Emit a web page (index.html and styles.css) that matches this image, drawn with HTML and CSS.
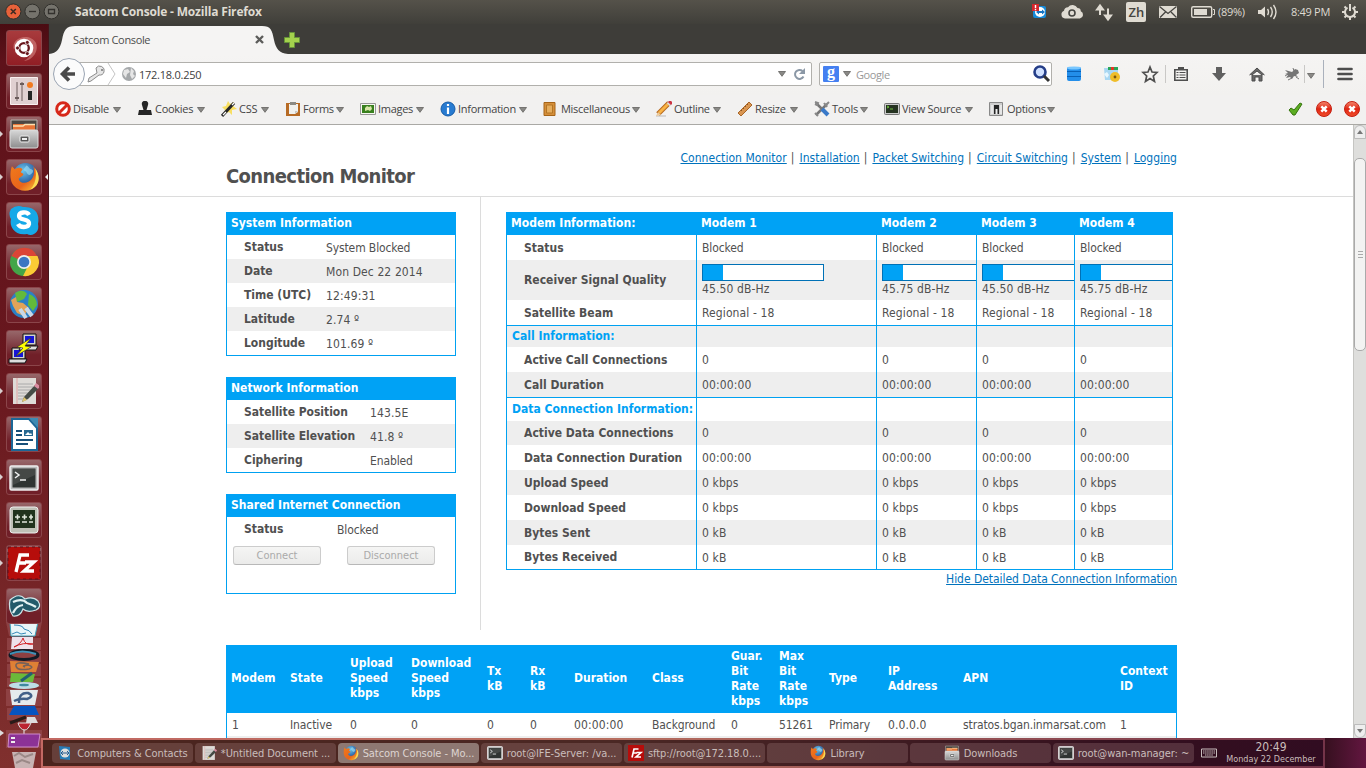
FILE: index.html
```html
<!DOCTYPE html>
<html lang="en">
<head>
<meta charset="utf-8">
<title>Satcom Console</title>
<link rel="stylesheet" href="styles.css">
</head>
<body>
<svg class="defs" width="0" height="0">
  <defs>
    <linearGradient id="metal" x1="0" y1="0" x2="0" y2="1"><stop offset="0" stop-color="#d8d8d8"/><stop offset="1" stop-color="#8d8d8d"/></linearGradient>
    <radialGradient id="foxglobe" cx=".4" cy=".3" r=".7"><stop offset="0" stop-color="#6bc7ee"/><stop offset="1" stop-color="#153a86"/></radialGradient>
    <linearGradient id="foxfur" x1="0" y1="0" x2="1" y2="1"><stop offset="0" stop-color="#f07a1c"/><stop offset=".6" stop-color="#e8641b"/><stop offset="1" stop-color="#fbd03c"/></linearGradient>
    <linearGradient id="redball" x1="0" y1="0" x2="0" y2="1"><stop offset="0" stop-color="#f58a70"/><stop offset=".5" stop-color="#e02412"/><stop offset="1" stop-color="#f0502c"/></linearGradient>
    <symbol id="caret" viewBox="0 0 8 6"><path d="M.5.5h7L4 5.3z" fill="#8a8986" stroke="#6c6b69" stroke-width=".9"/></symbol>
    <symbol id="firefox" viewBox="0 0 32 32">
      <circle cx="17" cy="14.500" r="13" fill="url(#foxglobe)"/>
      <path d="M18 4c3 1 2 3 5 4s2 3 0 5-4 0-5-2-3-1-3-3z" fill="#9bdcf2" opacity=".65"/>
      <path d="M3 5l3 3c3-2 6-2 8 0l-2 3 3 2c-1 3-4 3-5 5 1 4 6 5 10 3 6-3 7-10 5-16 6 6 7 15 3 20-6 7-17 7-23 0C1 21 .5 12 3 5z" fill="url(#foxfur)"/>
      <path d="M27 7c6 8 5 18-5 22 5-5 7-13 5-22z" fill="#fbdc53"/>
    </symbol>
    <symbol id="terminal" viewBox="0 0 30 26"><rect x="1" y="1" width="28" height="24" rx="1.500" fill="#bbb" stroke="#eee" stroke-width="1.500"/><rect x="3.500" y="3.500" width="23" height="19" fill="#303432"/><path d="M6 7l4 3-4 3M11 15h6" stroke="#eee" stroke-width="1.500" fill="none"/><path d="M4 4h22v6L4 20z" fill="#fff" opacity=".1"/></symbol>
    <symbol id="note" viewBox="0 0 28 30"><path d="M2 2h23v26H2z" fill="#dedbd7"/><path d="M6 2v26" stroke="#e0a4a4"/><path d="M7 8h15M7 11h15M7 14h13M7 17h12M7 20h9M7 23h7" stroke="#aaa"/><path d="M11 26l2-5L24 9l4 3-11 11z" fill="#454b45"/><path d="M11 26l2-5 3 3z" fill="#ddc46d"/><path d="M23 10l2-3 4 3-2 3z" fill="#d98ba0"/></symbol>
    <symbol id="cabinet" viewBox="0 0 30 32"><path d="M2 2h26v12H2z" fill="#4d4742" stroke="#b9b3ae"/><path d="M4 6h22v6H4z" fill="#e87537"/><path d="M4 8h10l2-1.500h10" stroke="#fbe0b0" stroke-width="1.500" fill="none"/><rect x="1" y="12" width="28" height="18" rx="2" fill="url(#metal)" stroke="#ddd"/><rect x="11" y="18" width="9" height="6" rx="1" fill="#555" stroke="#eee"/><path d="M13 21h5" stroke="#eee" stroke-width="2"/></symbol>
    <symbol id="filezilla" viewBox="0 0 32 32"><path d="M0 0h32v32H0z" fill="#b60d0b"/><path d="M8 25l4-17h9M10 16h8M17 15h9l-10 9h10" fill="none" stroke="#fff" stroke-width="3.300"/></symbol>
    <symbol id="closeball" viewBox="0 0 16 16"><circle cx="8" cy="8" r="7.500" fill="url(#redball)" stroke="#c52012"/><path d="M5.300 5.300l5.400 5.400M10.700 5.300l-5.400 5.400" stroke="#fff" stroke-width="2.500"/></symbol>
  </defs>
</svg>

<div class="desktop">
  <header class="panel">
    <div class="controls">
      <svg width="62" height="24" viewBox="0 0 62 24"><circle cx="13.300" cy="11.500" r="7.600" fill="#e8623a" stroke="#31302c"/><path d="M10.800 9l5 5m0-5l-5 5" stroke="#3d2b22" stroke-width="1.600"/><circle cx="32.300" cy="11.500" r="7.400" fill="#75736c" stroke="#31302c"/><path d="M29 11.500h7" stroke="#33312d" stroke-width="1.300"/><circle cx="51.500" cy="11.500" r="7.400" fill="#75736c" stroke="#31302c"/><path d="M48.500 9.500h6v4h-6z" fill="none" stroke="#33312d" stroke-width="1.300"/></svg>
    </div>
    <div class="wintitle">Satcom Console - Mozilla Firefox</div>
    <svg class="tray" width="192" height="24" viewBox="1030 0 192 24">
      <rect x="1033" y="6" width="13" height="12" rx="2" fill="#178ad8"/><circle cx="1040" cy="12" r="5" fill="#fff"/><path d="M1036 12l3-2.500v1.500h3V9.500l3 2.500-3 2.500V13h-3v1.500z" fill="#1575c4"/><path d="M1032 4h7v7h-7z" fill="#d6262c"/><path d="M1035.500 5v3.200m0 .8v1.200" stroke="#fff" stroke-width="1.400"/>
      <path d="M1065 18.500a4 4 0 0 1-1-7.700 4 4 0 0 1 4-3.500 5.500 5.500 0 0 1 9.500.8 3.300 3.300 0 0 1 3.300 3.200 3.800 3.800 0 0 1-.9 7.200z" fill="#dfdbd2"/><circle cx="1072" cy="13" r="3" fill="none" stroke="#454440" stroke-width="1.600"/>
      <path d="M1100 15V7M1097 9.500l3-4 3 4zM1108 8.500V17M1105 15.500l3 4 3-4z" stroke="#dfdbd2" stroke-width="2" fill="#dfdbd2"/>
      <rect x="1126" y="2" width="20" height="20" rx="2" fill="#dfdbd2"/>
      <text x="1128.500" y="17" class="lang">Zh</text>
      <path d="M1159 6h18v12h-18z" fill="#dfdbd2"/><path d="M1159.500 6.500l8.500 7 8.500-7M1160 17.500l5.500-5.500M1176.500 17.500l-5.500-5.500" stroke="#454440" stroke-width="1.300" fill="none"/>
      <rect x="1191.700" y="6.700" width="20" height="10.600" rx="1.500" fill="none" stroke="#dfdbd2" stroke-width="1.400"/><path d="M1194 9h13v6h-13z" fill="#dfdbd2"/><path d="M1213 9.500h1.500v5h-1.500" stroke="#dfdbd2" fill="none"/>
    </svg>
    <span class="traytext battery">(89%)</span>
    <svg class="sound" width="22" height="24" viewBox="0 0 22 24"><path d="M1 10h3l4-3.500v11L4 14H1z" fill="#dfdbd2"/><path d="M10.500 9q2 3 0 6M13.500 7q3.500 5 0 10M16.500 5q5 7 0 14" stroke="#dfdbd2" stroke-width="1.400" fill="none"/></svg>
    <span class="traytext clock">8:49 PM</span>
    <svg width="18" height="24" viewBox="0 0 18 24"><path d="M6.500 7.700a5 5 0 1 0 5 0" fill="none" stroke="#dfdbd2" stroke-width="2"/><path d="M9 4v7M9 17v3M14 12h3M1 12h3M12.500 15.500l2 2M5.500 15.500l-2 2M13 8l1.500-1.500M5 8L3.500 6.500" stroke="#dfdbd2" stroke-width="2"/></svg>
  </header>

  <div class="workspace">
    <nav class="launcher">
      <div class="tile ubuntu"><svg viewBox="0 0 36 36"><path d="M8 20C4 7 24 2 30 13c3 8-3 17-12 18 8-4 10-13 3-17C15 10 9 13 8 20z" fill="#e8a5a0" opacity=".45"/><circle cx="18" cy="18" r="9.300" fill="#fff"/><circle cx="18" cy="18" r="4.800" fill="none" stroke="#68151b" stroke-width="2.300"/><g fill="#68151b" stroke="#fff" stroke-width=".8"><circle cx="11.500" cy="18" r="2"/><circle cx="21.300" cy="12.400" r="2"/><circle cx="21.300" cy="23.600" r="2"/></g></svg></div>
      <div class="tile"><svg viewBox="0 0 36 36"><path d="M4.500 4.500h27v27h-27z" fill="#e0d0d1" stroke="#faf0f0"/><path d="M11 9v19M16 9v19" stroke="#6b5b5b"/><path d="M9 25h4M14 11h4" stroke="#6b5b5b" stroke-width="2"/><circle cx="24" cy="12" r="3" fill="#f27a20"/><rect x="22" y="18" width="4" height="9" fill="#242424"/></svg></div>
      <div class="tile run"><svg viewBox="0 0 36 36"><use href="#cabinet" x="3" y="2" width="30" height="32"/></svg></div>
      <div class="tile run active"><svg viewBox="0 0 36 36"><use href="#firefox" x="3" y="2" width="31" height="32"/></svg></div>
      <div class="tile"><svg viewBox="0 0 36 36"><path d="M5 7q6-5 12-2c13-1 17 8 15 17 2 8-5 13-11 10C9 34 3 25 5 17q-3-5 0-10z" fill="#16a9e8"/><path d="M23 13c-2-4-10-3-10 1 0 5 11 2 10 8-1 4-9 4-11 0" fill="none" stroke="#fff" stroke-width="4.300"/></svg></div>
      <div class="tile"><svg viewBox="0 0 36 36"><circle cx="18" cy="18" r="14" fill="#43a548"/><path d="M18 18L5.500 12A14 14 0 0 1 31 12z" fill="#db4437"/><path d="M18 12h13.500A14 14 0 0 1 17 32l6-12z" fill="#fbcb35"/><circle cx="18" cy="18" r="7" fill="#eee"/><circle cx="18" cy="18" r="5.300" fill="#3b76c2"/></svg></div>
      <div class="tile"><svg viewBox="0 0 36 36"><circle cx="18" cy="17" r="14" fill="#2c80c5"/><path d="M9 6q8-5 12 1l-3 5-7 3zM23 7q8 3 8 11l-4 6-5-6z" fill="#63ba3b"/><path d="M5 13l5-3 1 5 6 1 6 5-5 8-7-3-4-7z" fill="#e3a358"/><path d="M14 22l6 9M20 21l6 8" stroke="#c8d8e8" stroke-width="4"/></svg></div>
      <div class="tile"><svg viewBox="0 0 36 36"><path d="M17 4h13v11H17zM6 18h13v11H6z" fill="#d3d3cc" stroke="#111"/><path d="M19 6h9v7h-9zM8 20h9v7H8z" fill="#1515d6"/><path d="M15 16h17l-2 4H13zM3 29h18l-2 4H3z" fill="#ddd" stroke="#111"/><path d="M25 8l-14 9 6 1-7 8 15-9-6-1z" fill="#ff0" stroke="#333" stroke-width=".7"/></svg></div>
      <div class="tile run"><svg viewBox="0 0 36 36"><use href="#note" x="5" y="3" width="28" height="30"/></svg></div>
      <div class="tile"><svg viewBox="0 0 36 36"><path d="M6 3h17l8 9v22H6z" fill="#fff" stroke="#1c6797" stroke-width="2"/><path d="M23 2l9 10V2z" fill="#3d8ab3"/><path d="M10 15h6M10 19h6M10 24h17M10 28h12" stroke="#174f79" stroke-width="2"/><path d="M18 14h9v6h-9z" fill="#286991"/><path d="M19 19l3-3 2 2 1-1 1 2z" fill="#fff"/></svg></div>
      <div class="tile run"><svg viewBox="0 0 36 36"><use href="#terminal" x="3" y="6" width="30" height="26"/></svg></div>
      <div class="tile"><svg viewBox="0 0 36 36"><rect x="4" y="5" width="28" height="26" rx="3" fill="#bfc1b7" stroke="#eee"/><path d="M7 8h22v18H7z" fill="#20321d"/><path d="M9 15h5M16 15h5M23 15h4M11.500 12.500v5M18.500 12.500v5M25 12.500v5M9 20h5M16 20h5M23 20h4" stroke="#dfe6db" stroke-width="1.600"/></svg></div>
      <div class="tile run"><svg viewBox="0 0 36 36"><use href="#filezilla" x="2" y="2" width="32" height="32"/><path d="M2 2h32v32H2z" fill="none" stroke="#611018" stroke-dasharray="3 3"/></svg></div>
      <div class="tile last"><svg viewBox="0 0 36 36"><path d="M4 12q9-8 15-1 8-3 13 2 4 6-2 9-9 3-13-1-3 8-10 7-5-7-3-16z" fill="#225b6b" stroke="#cde5e8" stroke-width="1.200"/><path d="M7 14q9-4 14 1 6 2 9 4M7 25q3-7 10-8" fill="none" stroke="#e3f3f3" stroke-width="2.200"/></svg></div>
      <svg class="stack" width="49" height="146" viewBox="0 0 49 146">
        <g fill="#9e5357" opacity=".55"><path d="M6 0h36l-3 14H9z"/><path d="M7 16h34v12H7zM7 29h34v11H7zM7 42h34v12H7zM7 56h34v9H7zM6 67h36v17H6zM7 86h34v12H7zM6 108h36v18H6z"/></g>
        <path d="M10 0h28l-3 14H11z" fill="#e9f5f8" stroke="#3da2bb"/><path d="M14 3q9 0 10 4 6 1 8 5M12 12l5-2 4 2 5-1" stroke="#3489b8" fill="none"/>
        <path d="M12 15h21v12H11z" fill="#eee1eb"/><path d="M14 25q7-3 9-9 2 8 10 6-10-2-19 3" stroke="#d32329" fill="none"/>
        <ellipse cx="24" cy="33" rx="14" ry="4.500" fill="none" stroke="#111a25" stroke-width="3"/><path d="M10 32q12-5 26 0" stroke="#3f92b9" stroke-width="2" fill="none"/>
        <path d="M10 39l29 1-3 10H11z" fill="#df8035"/><path d="M29 42q-14-3-13 2t13 3q6-2-1-4-7 1-3 2" stroke="#75615a" stroke-width="1.600" fill="none"/>
        <path d="M11 51l24 1-2 8H10z" fill="#6bb93a"/><path d="M21 59l11-8" stroke="#225f72" stroke-width="3"/>
        <ellipse cx="24" cy="63.500" rx="15" ry="3.500" fill="#bedde5"/><ellipse cx="24" cy="63" rx="5" ry="1.300" fill="#3f8aa0"/>
        <path d="M10 68h28l-3 15H12z" fill="#e5eaed"/><path d="M19 81q0-11 9-10 7 3-1 6-7-1-13 2" stroke="#415f88" stroke-width="2.500" fill="none"/>
        <path d="M14 84h21l4 9H9z" fill="#0754c0"/><path d="M10 101l16-6" stroke="#291b18" stroke-width="3"/><path d="M27 95h8l3 6H26z" fill="#ddd"/>
        <path d="M18 101h13q-3 7-6 7-5 0-7-7" fill="#bc2330" stroke="#ddd"/><path d="M24 108v4" stroke="#eee"/>
        <path d="M9 112h31l-2 13H8z" fill="#8c3296" stroke="#ce8ac9"/><path d="M11 115h4v2h-4zM11 119h4v2h-4z" fill="#eee"/>
        <path d="M12 130h24l-3 16H15z" fill="#dad5d4" opacity=".8"/><path d="M14 134l5-3 6 4 8-3M16 141l6-3 8 3" stroke="#9b8987" stroke-width="2" fill="none"/>
        <path d="M0 108l4 3-4 3z" fill="#ddd"/>
      </svg>
    </nav>

    <main class="browser">
      <div class="tabs">
        <svg class="tabshape" width="242" height="30" viewBox="0 0 242 30"><path d="M0 30C8 29 11 25 13 16 15 6 17 2 26 2h187c9 0 10 4 12 14 2 9 5 13 14 14z" fill="#f5f4f3"/></svg>
        <div class="tabface"><span>Satcom Console</span><svg width="9" height="9" viewBox="0 0 9 9"><path d="M1 1l7 7M8 1L1 8" stroke="#5c5c5a" stroke-width="2.400"/></svg></div>
        <svg class="newtab" width="16" height="16" viewBox="0 0 16 16"><path d="M5.500.5h5v5h5v5h-5v5h-5v-5h-5v-5h5z" fill="#a4d24d" stroke="#67933a"/></svg>
      </div>
      <div class="navbar">
        <svg class="back" width="34" height="34" viewBox="0 0 34 34"><circle cx="17" cy="17" r="15.500" fill="#fbfbfb" stroke="#9aa4b2"/><path d="M17 10.500L10.500 17l6.500 6.500M11 17h12" stroke="#4a4a4a" stroke-width="3.600" fill="none"/></svg>
        <div class="url">
          <svg width="56" height="22" viewBox="0 0 56 22"><path d="M11 5a4.500 4.500 0 1 1 3 7l-8 6-3 1 1-4 8-5z" fill="#e6e6e6" stroke="#8c8c8c"/><circle cx="17" cy="7" r="1" fill="#777"/><path d="M23 0l7 11-7 11" stroke="#c4c4c4" fill="none"/><circle cx="44" cy="11" r="7" fill="#a5a8aa"/><path d="M39 7l4-1 2 3-3 2-1 4-3-4zM46 5l3 3-1 3 2 2-3 3-2-4z" fill="#e6e6e6"/></svg>
          <span class="address">172.18.0.250</span>
          <svg class="car" width="8" height="6"><use href="#caret"/></svg>
          <svg width="13" height="14" viewBox="0 0 13 14"><path d="M10.500 9.500A4.500 4.500 0 1 1 9.500 4" fill="none" stroke="#8b98a6" stroke-width="2"/><path d="M12 1v6H6z" fill="#8b98a6"/></svg>
        </div>
        <div class="search">
          <span class="g">g</span><svg width="8" height="6"><use href="#caret"/></svg><span class="hint">Google</span>
          <svg width="19" height="20" viewBox="0 0 19 20"><circle cx="8" cy="8" r="5.500" fill="#cfe0ff" stroke="#253e88" stroke-width="2.600"/><path d="M12 12l5 5" stroke="#333" stroke-width="3"/></svg>
        </div>
        <svg class="actions" width="303" height="40" viewBox="1052 54 303 40">
          <rect x="1067" y="67" width="14" height="14" rx="2" fill="#238eea"/><path d="M1067 71.500h14M1067 76.500h14" stroke="#0960b5"/><ellipse cx="1074" cy="68" rx="7" ry="1.600" fill="#79c7ff"/>
          <path d="M1104 68h14v12h-13z" fill="#a9d7f2"/><path d="M1108 67h10v3h-10z" fill="#28a558"/><path d="M1111 67h3v3h-3z" fill="#e43527"/><circle cx="1115" cy="77" r="5" fill="#efbd29"/><circle cx="1115" cy="77" r="1.400" fill="#775711"/><path d="M1104 74l3-2 2 3-2 3z" fill="#e7f7ff"/>
          <path d="M1150 67l2 5 5 .5-3.700 3.500 1.200 5.500-4.500-3-4.500 3 1.200-5.500-3.700-3.500 5-.5z" fill="none" stroke="#4f4f4f" stroke-width="1.700"/><path d="M1165.500 65v18M1304.500 65v18" stroke="#c9c8c6"/><path d="M1323.500 60v28" stroke="#aab1bc"/>
          <path d="M1174.800 69.800h12.400v10.400h-12.400z" fill="none" stroke="#4f4f4f" stroke-width="1.600"/><path d="M1178 69v-2h6v2z" fill="#4f4f4f"/><path d="M1176.500 72.500h2m1 0h6m-9 2.500h2m1 0h6m-9 2.500h2m1 0h6" stroke="#4f4f4f"/>
          <path d="M1216 67h6v6h4l-7 8-7-8h4z" fill="#606060"/>
          <path d="M1249.500 75l7.500-7 7.500 7M1252 75v6h3v-4h4v4h3v-6l-5-4z" fill="#686868" stroke="#4c4c4c"/>
          <path d="M1285 70l7 2 3-3 3 1 1 3-3 2 2 2-4-1-2 3-2-2-4 1 2-3-3-1 3-1z" fill="#757575"/><path d="M1285 76l5-3M1292 78l-4 2M1294 71l-1-3M1296 77l3 2" stroke="#777"/>
          <use href="#caret" x="1307" y="73" width="8" height="6"/>
          <path d="M1338.500 69h13M1338.500 74h13M1338.500 79h13" stroke="#4d4d4d" stroke-width="2.700" stroke-linecap="round"/>
        </svg>
      </div>
      <div class="devbar">
        <div class="tool"><svg viewBox="0 0 16 16"><circle cx="8" cy="8" r="6.300" fill="#fff" stroke="#d7281a" stroke-width="3"/><path d="M4 12l8-8" stroke="#d7281a" stroke-width="3"/></svg><span>Disable</span><svg class="car"><use href="#caret"/></svg></div>
        <div class="tool"><svg viewBox="0 0 16 16"><path d="M5 4a3.200 3.200 0 1 1 6 0L9.500 9H14l1 5H1l1-5h4.500z" fill="#262626"/></svg><span>Cookies</span><svg class="car"><use href="#caret"/></svg></div>
        <div class="tool"><svg viewBox="0 0 16 16"><path d="M7 0l2 3 4-2-1 4 4 3-5 1v5L8 11l-5 2 1-4-3-3 4-1z" fill="#f8df62"/><path d="M1 15L13 2" stroke="#272727" stroke-width="3"/><path d="M2 14l3-3M11 4l2-2" stroke="#fff" stroke-width="1.300"/></svg><span>CSS</span><svg class="car"><use href="#caret"/></svg></div>
        <div class="tool"><svg viewBox="0 0 16 16"><path d="M1 2h14v13H1z" fill="#b76b25"/><path d="M4 3h9v8l-3 2H4z" fill="#f1f1ee"/><path d="M5 1h6v3H5z" fill="#8c8b85"/><path d="M10 13v-3h3" fill="#c7c7c3"/></svg><span>Forms</span><svg class="car"><use href="#caret"/></svg></div>
        <div class="tool"><svg viewBox="0 0 16 16"><path d="M.5 2.500h15v11H.5z" fill="#f8f8f2" stroke="#979795"/><path d="M2 4h12v8H2z" fill="#39801e"/><path d="M5 7l2-2 2 1 2-1 1 3-2 2-2-1-3 1z" fill="#d8e6a8"/></svg><span>Images</span><svg class="car"><use href="#caret"/></svg></div>
        <div class="tool"><svg viewBox="0 0 16 16"><circle cx="8" cy="8" r="7" fill="#287bd1" stroke="#155ba7"/><path d="M8 3v2M8 6.500V13" stroke="#fff" stroke-width="2.200"/></svg><span>Information</span><svg class="car"><use href="#caret"/></svg></div>
        <div class="tool"><svg viewBox="0 0 16 16"><path d="M1 1.500h11v13H1z" fill="#d58f3a" stroke="#a66418"/><path d="M3.500 4h6v8h-6z" fill="#e5ad5d" stroke="#b37525"/></svg><span>Miscellaneous</span><svg class="car"><use href="#caret"/></svg></div>
        <div class="tool"><svg viewBox="0 0 16 16"><path d="M0 15h10" stroke="#bbb"/><path d="M2 13L13 2" stroke="#b6671c" stroke-width="5"/><path d="M3 12l9-9" stroke="#f9b345" stroke-width="3"/><path d="M11.500 1.500l3 3" stroke="#ddd" stroke-width="2"/><path d="M13 0l3 3" stroke="#cb3341" stroke-width="3"/><path d="M0 15l2-4 3 3z" fill="#eecb9a"/></svg><span>Outline</span><svg class="car"><use href="#caret"/></svg></div>
        <div class="tool"><svg viewBox="0 0 16 16"><path d="M1 12L12 1l3 3L4 15z" fill="#d99550" stroke="#a96627"/><path d="M4 9l1 1M6 7l1 1M8 5l1 1M10 3l1 1" stroke="#8b5522"/></svg><span>Resize</span><svg class="car"><use href="#caret"/></svg></div>
        <div class="tool"><svg viewBox="0 0 16 16"><path d="M2 14L13 3M2 2l7 7" stroke="#777" stroke-width="2.500"/><path d="M8 8l6 6" stroke="#3979c8" stroke-width="4"/><path d="M1 1l3 1-1 2-2-1M15 1l-3 3M10 2l3 4M1 12l3 3" stroke="#888" stroke-width="2" fill="none"/></svg><span>Tools</span><svg class="car"><use href="#caret"/></svg></div>
        <div class="tool"><svg viewBox="0 0 16 16"><rect x=".5" y="2.500" width="15" height="11" rx="1" fill="#ccc" stroke="#777"/><path d="M2 4h12v8H2z" fill="#263321"/><path d="M3 5l2 1-2 1M6 8h3" stroke="#71c33e" fill="none"/></svg><span>View Source</span><svg class="car"><use href="#caret"/></svg></div>
        <div class="tool"><svg viewBox="0 0 16 16"><path d="M.5 1.500h13v13H.5z" fill="#cecece" stroke="#888"/><path d="M5 4h5v9H5z" fill="#242424"/><path d="M6.500 8h2v5h-2z" fill="#eee"/><path d="M3 4v9M12 4v9" stroke="#fff"/></svg><span>Options</span><svg class="car"><use href="#caret"/></svg></div>
        <svg class="check" width="16" height="16" viewBox="0 0 16 16"><path d="M1 9l2-2 3 2 6-7 2 1-7 11H5z" fill="#5cad22" stroke="#35730d"/></svg>
        <svg width="16" height="16"><use href="#closeball"/></svg>
        <svg width="16" height="16"><use href="#closeball"/></svg>
      </div>

      <div class="viewport">
        <div class="page">
          <header class="pagehead">
            <h1>Connection Monitor</h1>
            <nav class="links"><a>Connection Monitor</a><i>|</i><a>Installation</a><i>|</i><a>Packet Switching</a><i>|</i><a>Circuit Switching</a><i>|</i><a>System</a><i>|</i><a>Logging</a></nav>
          </header>
          <div class="columns">
            <aside class="side">
              <section class="box sys"><h2>System Information</h2>
                <dl><dt>Status</dt><dd>System Blocked</dd></dl><dl><dt>Date</dt><dd class="num">Mon Dec 22 2014</dd></dl><dl><dt>Time (UTC)</dt><dd class="num">12:49:31</dd></dl><dl><dt>Latitude</dt><dd class="num">2.74 º</dd></dl><dl><dt>Longitude</dt><dd class="num">101.69 º</dd></dl></section>
              <section class="box net"><h2>Network Information</h2>
                <dl><dt>Satellite Position</dt><dd class="num">143.5E</dd></dl><dl><dt>Satellite Elevation</dt><dd class="num">41.8 º</dd></dl><dl><dt>Ciphering</dt><dd>Enabled</dd></dl></section>
              <section class="box shared"><h2>Shared Internet Connection</h2>
                <dl><dt>Status</dt><dd>Blocked</dd></dl><div class="buttons"><button disabled>Connect</button><button disabled>Disconnect</button></div></section>
            </aside>
            <div class="detail">
              <div class="modems">
                <div class="row head"><b>Modem Information:</b><b>Modem 1</b><b>Modem 2</b><b>Modem 3</b><b>Modem 4</b></div>
                <div class="row"><b>Status</b><span>Blocked</span><span>Blocked</span><span>Blocked</span><span>Blocked</span></div>
                <div class="row grey signal num"><b>Receiver Signal Quality</b><span><i class="bar"></i>45.50 dB-Hz</span><span><i class="bar"></i>45.75 dB-Hz</span><span><i class="bar"></i>45.50 dB-Hz</span><span><i class="bar"></i>45.75 dB-Hz</span></div>
                <div class="row num"><b>Satellite Beam</b><span>Regional - 18</span><span>Regional - 18</span><span>Regional - 18</span><span>Regional - 18</span></div>
                <div class="row grey group"><b>Call Information:</b><span></span><span></span><span></span><span></span></div>
                <div class="row num"><b>Active Call Connections</b><span>0</span><span>0</span><span>0</span><span>0</span></div>
                <div class="row grey num"><b>Call Duration</b><span>00:00:00</span><span>00:00:00</span><span>00:00:00</span><span>00:00:00</span></div>
                <div class="row group data"><b>Data Connection Information:</b><span></span><span></span><span></span><span></span></div>
                <div class="row grey short"><b>Active Data Connections</b><span>0</span><span>0</span><span>0</span><span>0</span></div>
                <div class="row num"><b>Data Connection Duration</b><span>00:00:00</span><span>00:00:00</span><span>00:00:00</span><span>00:00:00</span></div>
                <div class="row grey num"><b>Upload Speed</b><span>0 kbps</span><span>0 kbps</span><span>0 kbps</span><span>0 kbps</span></div>
                <div class="row num"><b>Download Speed</b><span>0 kbps</span><span>0 kbps</span><span>0 kbps</span><span>0 kbps</span></div>
                <div class="row grey num"><b>Bytes Sent</b><span>0 kB</span><span>0 kB</span><span>0 kB</span><span>0 kB</span></div>
                <div class="row short num low"><b>Bytes Received</b><span>0 kB</span><span>0 kB</span><span>0 kB</span><span>0 kB</span></div>
              </div>
              <a class="hide">Hide Detailed Data Connection Information</a>
            </div>
          </div>
          <div class="sessions">
            <div class="srow shead"><b>Modem</b><b>State</b><b>Upload<br>Speed<br>kbps</b><b>Download<br>Speed<br>kbps</b><b>Tx<br>kB</b><b>Rx<br>kB</b><b>Duration</b><b>Class</b><b>Guar.<br>Bit<br>Rate<br>kbps</b><b>Max<br>Bit<br>Rate<br>kbps</b><b>Type</b><b>IP<br>Address</b><b>APN</b><b>Context<br>ID</b></div>
            <div class="srow"><span>1</span><span>Inactive</span><span>0</span><span>0</span><span>0</span><span>0</span><span class="num">00:00:00</span><span>Background</span><span>0</span><span>51261</span><span>Primary</span><span class="num">0.0.0.0</span><span>stratos.bgan.inmarsat.com</span><span>1</span></div>
            <div class="srow next"></div>
          </div>
        </div>
        <div class="scroll"><div class="up"><svg width="6" height="4"><path d="M0 4l3-4 3 4z" fill="#777"/></svg></div><div class="thumb"><i></i><i></i><i></i></div><div class="up down"><svg width="6" height="4"><path d="M0 0l3 4 3-4z" fill="#777"/></svg></div></div>
      </div>
    </main>
  </div>

  <footer class="dock">
    <div class="task"><svg width="16" height="16" viewBox="0 0 16 16"><path d="M2 1l11 1v13L3 14z" fill="#277bb5"/><circle cx="8" cy="8" r="4.500" fill="#ddd"/><path d="M4 8h8M6 6L4 8l2 2M10 6l2 2-2 2" stroke="#245b90" fill="none"/></svg><span>Computers &amp; Contacts</span></div>
    <div class="task"><svg width="16" height="16"><use href="#note"/></svg><span>*Untitled Document ...</span></div>
    <div class="task current"><svg width="16" height="16"><use href="#firefox"/></svg><span>Satcom Console - Mo...</span></div>
    <div class="task"><svg width="16" height="16"><use href="#terminal"/></svg><span>root@IFE-Server: /va...</span></div>
    <div class="task"><svg width="16" height="16"><use href="#filezilla"/></svg><span>sftp://root@172.18.0....</span></div>
    <div class="task"><svg width="16" height="16"><use href="#firefox"/></svg><span>Library</span></div>
    <div class="task"><svg width="16" height="16"><use href="#cabinet"/></svg><span>Downloads</span></div>
    <div class="task"><svg width="16" height="16"><use href="#terminal"/></svg><span>root@wan-manager: ~</span></div>
    <svg class="keys" width="16" height="10" viewBox="0 0 16 10"><path d="M.5 1h15v8H.5z" fill="none" stroke="#c8bdbd"/><path d="M2 3h12M2 5h12M4 7h8" stroke="#c8bdbd" stroke-width="1.200" stroke-dasharray="1.500 .6"/></svg>
    <div class="date"><span>20:49</span><span>Monday 22 December</span></div>
  </footer>
</div>
</body>
</html>
```
FILE: styles.css
```css
* { box-sizing: border-box; }
body { margin: 0; overflow: hidden; font: 12px "DejaVu Sans Condensed", "DejaVu Sans", sans-serif; font-stretch: condensed; color: #505050; }
.defs { position: absolute; }
svg { flex: none; display: block; }
.desktop { position: relative; width: 1366px; height: 768px; display: flex; flex-direction: column; background: linear-gradient(90deg, #84292a, #36101f 97%, #631640); }
.panel, .tabs, .navbar, .devbar { font-family: "Open Sans", "Noto Sans", sans-serif; font-stretch: normal; }

.panel { height: 24px; flex: none; display: flex; align-items: center; background: linear-gradient(#55524a, #403f3a); color: #dfdbd2; padding-right: 7px; }
.controls { width: 75px; }
.wintitle { flex: 1; margin-top: -2px; font-size: 12px; font-weight: 700; letter-spacing: -.18px; }
.tray { margin-right: -4px; }
.lang { font: 600 13px "Open Sans", sans-serif; fill: #45443f; }
.traytext { margin-top: -2px; font-size: 11px; letter-spacing: -.3px; white-space: nowrap; }
.battery { width: 28px; margin-right: 11px; }
.sound { margin-right: 12px; }
.clock { width: 50px; }

.workspace { flex: 1; min-height: 0; display: flex; }
.launcher { width: 49px; flex: none; display: flex; flex-direction: column; background: linear-gradient(#4a0c12, #5e121a 5%, #68171e 45%, #80302e); border-right: 1px solid #44151a; padding-top: 6px; }
.tile { position: relative; width: 36px; height: 36px; margin: 0 0 6.900px 6px; flex: none; border: 1px solid #8b454a; border-radius: 3px; background: linear-gradient(#97676a, #701f28 70%); }
.tile svg { margin: -1px; width: 36px; height: 36px; }
.tile.last { margin-bottom: 0; }
.ubuntu { background: linear-gradient(#a83b3d, #911e25); }
.run::before { content: ""; position: absolute; left: -7px; top: 14px; border: 3px solid transparent; border-left-color: #d8cfcf; }
.active::after { content: ""; position: absolute; right: -7px; top: 14px; border: 3px solid transparent; border-right-color: #eee; }
.stack { margin-top: -2px; }

.browser { flex: 1; min-width: 0; display: flex; flex-direction: column; height: 714px; }
.tabs { height: 30px; flex: none; display: grid; grid-template-columns: 235px 16px; background: #3e3d39; align-items: center; }
.tabshape { grid-area: 1 / 1; }
.tabface { grid-area: 1 / 1; display: flex; justify-content: space-between; align-items: center; padding: 0 20px 0 24px; width: 235px; font-size: 11px; letter-spacing: -.35px; color: #4c4c4c; }
.newtab { margin: 2px 0 0; }
.navbar { height: 41px; flex: none; display: flex; align-items: center; background: linear-gradient(#f5f4f3, #f2f1ef); padding: 0 0 1px 3px; }
.back { position: relative; z-index: 1; }
.url { width: 743px; height: 24px; margin-left: -17px; padding: 0 5px 0 15px; border: 1px solid #b1b0ac; border-radius: 2px; background: #fff; display: flex; align-items: center; }
.address { flex: 1; margin-left: -2px; font-size: 11px; color: #404040; letter-spacing: -.25px; }
.url .car { margin-right: 7px; }
.search { width: 233px; height: 24px; margin-left: 7px; padding: 0 0 0 3px; border: 1px solid #b1b0ac; border-radius: 2px; background: #fff; display: flex; align-items: center; }
.g { width: 16px; height: 16px; margin-right: 4px; border-radius: 1px; background: #4580f1; color: #fff; font: 700 16px/12px "Liberation Serif", serif; text-align: center; }
.hint { flex: 1; margin-left: 5px; font-size: 11px; color: #999; letter-spacing: -.4px; }
.devbar { height: 30px; flex: none; display: grid; grid-template-columns: 82px 84px 64px 75px 80px 103px 113px 81px 77px 70px 105px 299px 28px 28px 16px; align-items: center; background: #f2f1f0; border-bottom: 1px solid #aaa9a5; padding: 0 0 1px 6px; font-size: 11px; color: #444; }
.tool { display: flex; align-items: center; padding-right: 16px; letter-spacing: -.28px; white-space: nowrap; }
.tool:nth-child(12) { width: 82px; }
.tool > svg:first-child { width: 16px; height: 16px; margin-right: 2px; }
.tool > span { margin-top: -1px; }
.tool .car { width: 8px; height: 6px; margin: 2px 0 0 auto; }

.viewport { flex: 1; min-height: 0; display: flex; background: #fff; }
.page { flex: 1; overflow: hidden; }
.pagehead { height: 72px; border-bottom: 1px solid #dcdcdc; display: flex; justify-content: space-between; padding: 25px 176px 0 177px; }
h1 { margin: 13px 0 0; font-size: 20px; line-height: 26px; letter-spacing: -.61px; white-space: nowrap; }
a { color: #0072bc; text-decoration: underline; }
.links { line-height: 16px; white-space: nowrap; letter-spacing: .04px; }
.links i { font-style: normal; margin: 0 5px 0 4px; }
.columns { height: 433px; display: flex; padding-left: 177px; }
.side { width: 255px; border-right: 1px solid #dcdcdc; padding-top: 15px; }
.box { width: 230px; border: 1px solid #00a1f1; border-top: 0; margin-bottom: 21px; }
h2 { margin: 0 -1px; height: 23px; padding-left: 5px; background: #00a2f5; color: #fff; font-size: 12px; line-height: 22px; letter-spacing: .03px; }
dl { margin: 0; height: 24px; display: flex; padding-left: 17px; line-height: 24px; white-space: nowrap; }
dl:nth-of-type(even) { background: #eee; }
dt { width: 82px; font-weight: 700; letter-spacing: -.02px; }
dd { margin: 1px 0 0; letter-spacing: -.12px; }
dd.num, .row.num span, .srow .num { letter-spacing: .11px; }
.net dt { width: 126px; }
.shared dt { width: 93px; }
.shared { height: 100px; }
.buttons { display: flex; gap: 26px; padding: 5px 0 0 6px; }
button { width: 88px; height: 19px; padding: 0 0 1px; border: 1px solid #ccc; border-bottom-color: #b8b8b8; border-radius: 3px; background: linear-gradient(#f5f5f4, #ebebea); font: 11px "DejaVu Sans Condensed", sans-serif; color: #aaa; }
.detail { width: 697px; padding: 15px 0 0 25px; display: flex; flex-direction: column; }
.modems { width: 667px; border: 1px solid #00a1f1; border-top: 0; }
.row { display: grid; grid-template-columns: 190px 180px 100px 98px 97px; height: 25px; line-height: 26px; white-space: nowrap; letter-spacing: -.1px; }
.row b { padding-left: 17px; letter-spacing: .02px; }
.row span { border-left: 1px solid #00a1f1; padding-left: 5px; overflow: hidden; margin-left: -1px; height: 100%; }
.row.head { height: 23px; margin: 0 -1px; padding-left: 1px; background: #00a2f5; color: #fff; line-height: 22px; }
.row.head b { padding-left: 4px; }
.grey { background: #eee; }
.row.signal { height: 40px; line-height: 40px; }
.signal span { line-height: 16px; padding-top: 4px; }
.bar { display: block; width: 122px; height: 17px; border: 1px solid #0071b6; background: linear-gradient(90deg, #00a2f5 20px, #fff 20px); }
.row.group { height: 22px; border-top: 1px solid #00a1f1; line-height: 20px; color: #00a2f5; }
.row.data { height: 24px; line-height: 22px; }
.row.group b { padding-left: 5px; }
.row.short { height: 24px; line-height: 24px; }
.low span { padding-top: 1px; }
.hide { align-self: flex-end; margin-right: 1px; line-height: 18px; white-space: nowrap; letter-spacing: -.05px; }
.sessions { width: 951px; margin: 15px 0 0 177px; border: 1px solid #00a1f1; border-top: 0; }
.srow { display: grid; grid-template-columns: 59px 60px 61px 76px 43px 44px 78px 79px 48px 50px 59px 75px 157px 1fr; height: 23px; line-height: 25px; padding-left: 4px; letter-spacing: -.11px; white-space: nowrap; }
.shead { height: 68px; margin: 0 -1px; padding: 0 0 1px 5px; background: #00a2f5; color: #fff; line-height: 15px; align-items: center; letter-spacing: 0; }
.next { background: #eee; }
.srow span:first-child { padding-left: 1px; }
.scroll { width: 13px; flex: none; display: flex; flex-direction: column; background: #dededc; border-left: 1px solid #c5c5c2; }
.up { height: 14px; border: 1px solid #bbb; border-radius: 6px 6px 0 0; background: #eee; display: flex; align-items: center; justify-content: center; }
.thumb { height: 193px; margin-top: 19px; border: 1px solid #aaa; border-radius: 5px; background: #f3f3f2; display: flex; flex-direction: column; gap: 2px; align-items: center; justify-content: center; }
.thumb i { width: 5px; height: 1px; background: #aaa; }
.down { margin-top: auto; border-radius: 0 0 6px 6px; }

.dock { position: absolute; left: 41px; top: 738px; width: 1284px; height: 30px; border: 2px solid; border-image: linear-gradient(90deg, #c36963, #b76e60 45%, #743449) 1; background: linear-gradient(90deg, #4b241d, #4b2824 45%, #34101f 85%, #310c21); display: flex; align-items: center; padding-left: 9px; gap: 2px; color: #c9bdbb; font: 11px "DejaVu Sans Condensed", sans-serif; }
.task { width: 141px; height: 20px; flex: none; border-radius: 4px; background: rgba(190, 150, 150, .24); display: flex; align-items: center; justify-content: center; gap: 4px; white-space: nowrap; letter-spacing: -.08px; }
.current { background: #8e7872; color: #ddd4d1; }
.keys { margin-left: 5px; }
.date { width: 94px; margin-left: 5px; display: flex; flex-direction: column; align-items: center; line-height: 12px; font-size: 9px; white-space: nowrap; }
.date span:first-child { font-size: 12px; }
```
